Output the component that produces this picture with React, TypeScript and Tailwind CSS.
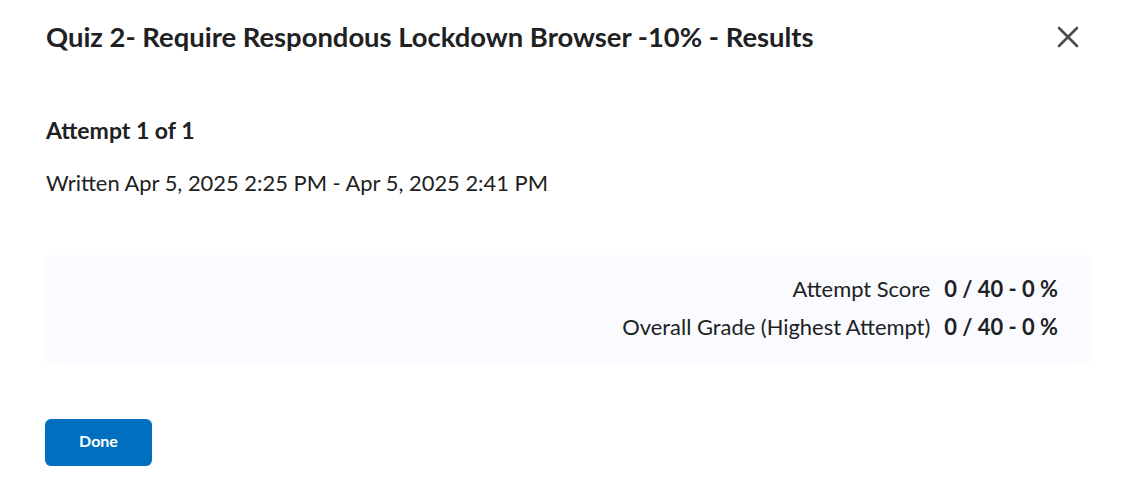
import React from "react";

const rows = [
  { label: "Attempt Score", value: "0 / 40 - 0 %" },
  { label: "Overall Grade (Highest Attempt)", value: "0 / 40 - 0 %" },
];

export default function App() {
  return (
    <div
      className="w-[1131px] h-[484px] bg-white text-[#202122] overflow-hidden"
      style={{ fontFamily: "Lato, 'Noto Sans', sans-serif" }}
    >
      <div className="flex items-center justify-between pl-[46px] pr-[51px] pt-[20px]">
        <h1 className="text-[27.4px] leading-[34px] font-bold">
          Quiz 2- Require Respondous Lockdown Browser -10% - Results
        </h1>
        <button className="w-[24px] h-[24px] flex items-center justify-center text-[#494c4e]">
          <svg width="22" height="22" viewBox="0 0 22 22" fill="none">
            <path d="M2 2 L20 20 M20 2 L2 20" stroke="currentColor" strokeWidth="2.6" strokeLinecap="round" />
          </svg>
        </button>
      </div>

      <div className="pl-[45px] pr-[40px]">
        <h2 className="mt-[62px] pl-px text-[23px] leading-[28px] font-bold">Attempt 1 of 1</h2>
        <p className="mt-[25px] pl-px text-[21.9px] leading-[28px]">
          Written Apr 5, 2025 2:25 PM - Apr 5, 2025 2:41 PM
        </p>

        <div className="mt-[58px] h-[110px] rounded-[8px] bg-[#f9fbff] flex flex-col items-end justify-center gap-[10px] pr-[33px] pb-[4px]">
          {rows.map((r) => (
            <div key={r.label} className="flex items-center gap-[14px] text-[21.9px] leading-[28px]">
              <span>{r.label}</span>
              <span className="font-bold">{r.value}</span>
            </div>
          ))}
        </div>

        <button className="mt-[54px] w-[107px] h-[47px] rounded-[6px] bg-[#006fbf] text-white text-[16px] font-bold pb-[3px]">
          Done
        </button>
      </div>
    </div>
  );
}
